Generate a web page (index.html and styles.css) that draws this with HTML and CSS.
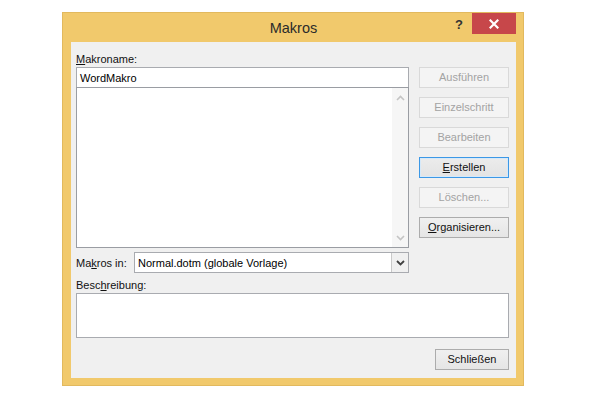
FILE: index.html
```html
<!DOCTYPE html>
<html lang="de">
<head>
<meta charset="utf-8">
<title>Makros</title>
<link rel="stylesheet" href="styles.css">
</head>
<body>
<div class="window">
  <div class="titlebar">
    <div></div>
    <div class="title">Makros</div>
    <div class="controls">
      <span class="help">?</span>
      <span class="close"><svg width="10" height="10" viewBox="0 0 10 10"><path d="M1.5 1.5 L8.5 8.5 M8.5 1.5 L1.5 8.5" stroke="#fff" stroke-width="2.2" stroke-linecap="square"/></svg></span>
    </div>
  </div>
  <div class="content">
    <div class="label top-label"><u>M</u>akroname:</div>
    <div class="left">
      <div class="textbox">WordMakro</div>
      <div class="listbox">
        <div class="listarea"></div>
        <div class="scrollbar">
          <svg width="9" height="6" viewBox="0 0 9 6"><path d="M1 5 L4.5 1.5 L8 5" fill="none" stroke="#c4c4c4" stroke-width="1.6"/></svg>
          <svg width="9" height="6" viewBox="0 0 9 6"><path d="M1 1 L4.5 4.5 L8 1" fill="none" stroke="#c4c4c4" stroke-width="1.6"/></svg>
        </div>
      </div>
    </div>
    <div class="buttons">
      <div class="btn disabled">Ausführen</div>
      <div class="btn disabled">Einzelschritt</div>
      <div class="btn disabled">Bearbeiten</div>
      <div class="btn focused"><u>E</u>rstellen</div>
      <div class="btn disabled">Löschen...</div>
      <div class="btn"><u>O</u>rganisieren...</div>
    </div>
    <div class="macros-in">
      <div class="label in-label">Ma<u>k</u>ros in:</div>
      <div class="combo">
        <div class="combo-text">Normal.dotm (globale Vorlage)</div>
        <div class="combo-arrow"><svg width="9" height="6" viewBox="0 0 9 6"><path d="M1 1 L4.5 4.5 L8 1" fill="none" stroke="#404040" stroke-width="1.8"/></svg></div>
      </div>
    </div>
    <div class="desc">
      <div class="label desc-label">Besc<u>h</u>reibung:</div>
      <div class="textarea"></div>
    </div>
    <div class="footer">
      <div class="btn close-btn">Schließen</div>
    </div>
  </div>
</div>
</body>
</html>
```
FILE: styles.css
```css
* { box-sizing: border-box; }
html, body { margin: 0; padding: 0; background: #fff; }
body {
  font-family: "Liberation Sans", Arial, sans-serif;
  font-size: 11px;
  color: #000;
}
.window {
  margin: 12px 0 0 62px;
  width: 462px;
  height: 374px;
  background: #f1c96c;
  border: 1px solid #e2b95e;
  padding: 0 7px 7px 8px;
  display: flex;
  flex-direction: column;
}
.titlebar {
  height: 29px;
  display: grid;
  grid-template-columns: 1fr auto 1fr;
  align-items: start;
}
.title {
  font-size: 14.5px;
  color: #2b2b2b;
  padding-top: 7px;
  line-height: 16px;
}
.controls {
  display: flex;
  justify-content: flex-end;
  align-items: flex-start;
}
.help {
  width: 26px;
  text-align: center;
  font-weight: bold;
  font-size: 13px;
  color: #333;
  padding-top: 5px;
  line-height: 14px;
}
.close {
  width: 44px;
  height: 21px;
  background: #c7474a;
  display: flex;
  align-items: center;
  justify-content: center;
}
.content {
  flex: 1;
  background: #f0f0f0;
  display: grid;
  grid-template-columns: 333px 90px;
  column-gap: 10px;
  align-content: start;
  padding: 10px 7px 0 5px;
}
.label { line-height: 14px; color: #111; }
.top-label { grid-column: 1 / 3; height: 15px; }
.left { display: flex; flex-direction: column; }
.textbox {
  height: 21px;
  border: 1px solid #a9abb0;
  background: #fff;
  padding: 3px 0 0 3px;
  line-height: 14px;
}
.listbox {
  margin-top: -1px;
  height: 161px;
  border: 1px solid #9a9da3;
  background: #fff;
  display: flex;
}
.listarea { flex: 1; }
.scrollbar {
  width: 16px;
  background: #f6f6f6;
  display: flex;
  flex-direction: column;
  justify-content: space-between;
  align-items: center;
  padding: 7px 0 6px;
}
.buttons {
  display: flex;
  flex-direction: column;
  gap: 9px;
}
.btn {
  height: 21px;
  border: 1px solid #acacac;
  background: linear-gradient(#f0f0f0, #e5e5e5);
  text-align: center;
  line-height: 19px;
  color: #111;
}
.btn.disabled {
  border-color: #d9d9d9;
  background: #f4f4f4;
  color: #a3a3a3;
}
.btn.focused {
  border-color: #3c98e6;
  box-shadow: inset 0 0 0 1px #d6e9f9;
  background: linear-gradient(#ececec, #e3e3e3);
}
.macros-in {
  grid-column: 1 / 2;
  margin-top: 4px;
  display: flex;
  align-items: center;
}
.in-label { width: 58px; }
.combo {
  flex: 1;
  height: 21px;
  border: 1px solid #a9abb0;
  background: #fff;
  display: flex;
}
.combo-text {
  flex: 1;
  padding: 3px 0 0 3px;
  line-height: 14px;
}
.combo-arrow {
  width: 17px;
  border-left: 1px solid #c9c9c9;
  background: #f0f0f0;
  display: flex;
  align-items: center;
  justify-content: center;
}
.desc {
  grid-column: 1 / 3;
  margin-top: 5px;
}
.desc-label { height: 15px; }
.textarea {
  height: 45px;
  border: 1px solid #a9abb0;
  background: #fff;
}
.footer {
  grid-column: 1 / 3;
  display: flex;
  justify-content: flex-end;
  margin-top: 11px;
}
.close-btn { width: 74px; }
u { text-decoration-thickness: 1px; text-underline-offset: 1px; }
```
